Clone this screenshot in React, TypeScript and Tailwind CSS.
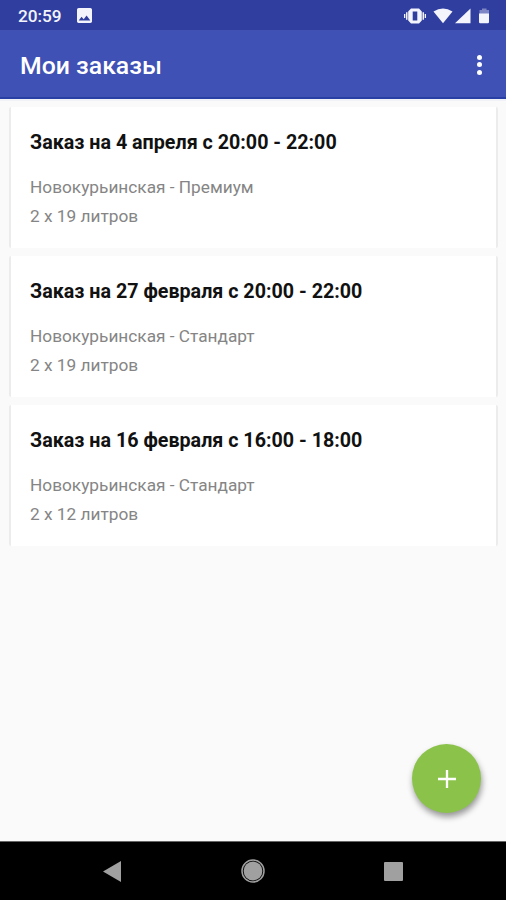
import React from "react";

interface Order {
  title: string;
  address: string;
  amount: string;
}

const orders: Order[] = [
  {
    title: "Заказ на 4 апреля с 20:00 - 22:00",
    address: "Новокурьинская - Премиум",
    amount: "2 x 19 литров",
  },
  {
    title: "Заказ на 27 февраля с 20:00 - 22:00",
    address: "Новокурьинская - Стандарт",
    amount: "2 x 19 литров",
  },
  {
    title: "Заказ на 16 февраля с 16:00 - 18:00",
    address: "Новокурьинская - Стандарт",
    amount: "2 x 12 литров",
  },
];

const StatusBar = () => {
  return (
    <div className="flex h-[30px] shrink-0 items-center justify-between bg-[#303f9f] pr-[16px] pl-[18px] text-[#f4f5fc]">
      <div className="flex items-center gap-[15px]">
        <span className="mt-[2px] text-[17.2px] leading-[20px] font-medium">20:59</span>
        <svg className="h-[15px] w-[15px]" viewBox="3 3 18 18" fill="currentColor">
          <path d="M21 19V5c0-1.1-.9-2-2-2H5c-1.1 0-2 .9-2 2v14c0 1.1.9 2 2 2h14c1.1 0 2-.9 2-2zM8.500 13.500l2.500 3.010L14.500 12l4.500 6H5l3.500-4.500z" />
        </svg>
      </div>
      <svg className="mt-px h-[18px] w-[86px]" viewBox="0 0 86 18" fill="currentColor">
        <path d="M0 7h1.300v4H0zM2 5.300h1.500v7.400H2zM20.700 7H22v4h-1.300zM18.500 5.300H20v7.400h-1.500z" />
        <path fillRule="evenodd" d="M7 1.500h8L17.800 4.500v9L15 16.500H7L4.200 13.500v-9zM8.700 4.500v9h4.600v-9z" />
        <path d="M29.500 4.500Q39 -1.500 48.500 4.500L39 16.200z" />
        <path d="M66.500 1.500V16.200H51z" />
        <path opacity=".4" d="M75.500 3H78V1.500h4.500V3H85v4h-9.500z" />
        <path d="M75 6.500h10V15q0 1.200-1.200 1.200h-7.600Q75 16.200 75 15z" />
      </svg>
    </div>
  );
};

const AppBar = () => {
  return (
    <header className="flex h-[69px] shrink-0 items-center justify-between border-b-2 border-[#2840a6] bg-[#3f51b5] pr-[24px] pl-[20px] text-white">
      <h1 className="mt-[5px] text-[24.8px] leading-[30px] font-medium">Мои заказы</h1>
      <div className="mt-[2px] flex flex-col gap-[2.500px]">
        <i className="size-[5px] rounded-full bg-white" />
        <i className="size-[5px] rounded-full bg-white" />
        <i className="size-[5px] rounded-full bg-white" />
      </div>
    </header>
  );
};

const OrderCard = ({ title, address, amount }: Order) => {
  return (
    <article className="h-[141px] rounded-[2px] border-x-2 border-[#ececec] bg-white px-[19px] pt-[24px]">
      <h2 className="text-[19.7px] leading-[24px] font-bold text-[#111]">{title}</h2>
      <p className="mt-[18px] text-[17.25px] leading-[29px] text-[#858585]">{address}</p>
      <p className="text-[17.25px] leading-[29px] text-[#858585]">{amount}</p>
    </article>
  );
};

const NavigationBar = () => {
  return (
    <nav className="flex h-[59px] shrink-0 items-center justify-between border-t border-[#666] bg-black pr-[103px] pl-[103px] text-[#a0a0a0]">
      <svg className="h-[21px] w-[19px]" viewBox="0 0 19 21" fill="currentColor">
        <path d="M0 10.500L18 0v21z" />
      </svg>
      <svg className="size-[24px]" viewBox="0 0 24 24" fill="currentColor">
        <circle cx="12" cy="12" r="11" fill="none" stroke="currentColor" strokeWidth="1.500" />
        <circle cx="12" cy="12" r="9.400" />
      </svg>
      <i className="size-[19px] rounded-[1px] bg-[#a0a0a0]" />
    </nav>
  );
};

const App = () => {
  return (
    <div className="relative flex h-[900px] w-[506px] flex-col overflow-hidden bg-[#fafafa] font-['Roboto','Noto_Sans',sans-serif]">
      <StatusBar />
      <AppBar />
      <main className="flex grow flex-col gap-[8px] border-t-2 border-[#f0f2f8] pt-[6px] pr-[8px] pl-[9px]">
        {orders.map((order) => (
          <OrderCard key={order.title} {...order} />
        ))}
      </main>
      <button
        aria-label="Новый заказ"
        className="absolute right-[25px] bottom-[87px] flex size-[69px] items-center justify-center rounded-full bg-[#8bc34a] shadow-[1px_4px_6px_rgba(0,0,0,0.4)]"
      >
        <svg className="size-[18px]" viewBox="0 0 18 18" stroke="white" strokeWidth="2.300">
          <path d="M9 0v18M0 9h18" />
        </svg>
      </button>
      <NavigationBar />
    </div>
  );
};

export default App;
